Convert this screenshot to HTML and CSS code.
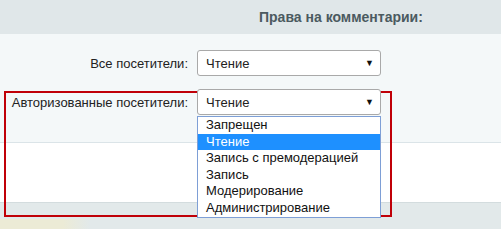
FILE: index.html
```html
<!DOCTYPE html>
<html lang="ru">
<head>
  <meta charset="UTF-8">
  <title>Права на комментарии</title>
  <link rel="stylesheet" href="styles.css">
</head>
<body>
  <div class="heading">
    <span class="heading-title">Права на комментарии:</span>
  </div>

  <div class="form">
    <div class="row">
      <label class="row-label">Все посетители:</label>
      <div class="select">
        <span>Чтение</span>
        <span class="arrow">&#9660;</span>
      </div>
    </div>
    <div class="row">
      <label class="row-label">Авторизованные посетители:</label>
      <div class="select open">
        <span>Чтение</span>
        <span class="arrow">&#9660;</span>
        <ul class="options">
          <li>Запрещен</li>
          <li class="selected">Чтение</li>
          <li>Запись с премодерацией</li>
          <li>Запись</li>
          <li>Модерирование</li>
          <li>Администрирование</li>
        </ul>
      </div>
    </div>
    <div class="mark"></div>
  </div>

  <div class="blank"></div>
  <div class="footer">
    <div class="footer-glow"></div>
  </div>
</body>
</html>
```

FILE: styles.css
```css
body {
  margin: 0;
  font-family: "Liberation Sans", Arial, sans-serif;
  font-size: 13px;
  color: #222;
  background-color: #e2e9ea;
  width: 501px;
  height: 229px;
  overflow: hidden;
}
.heading {
  height: 34px;
  background-color: #e0e7e9;
  display: flex;
  align-items: center;
  padding-left: 259px;
}
.heading-title {
  font-weight: bold;
  color: #4b5a60;
  font-size: 14px;
}
.form {
  position: relative;
  background-color: #f4f8f9;
  border-bottom: 1px solid #dbe4e8;
  padding-top: 16px;
  box-sizing: border-box;
  height: 109px;
}
.row {
  display: grid;
  grid-template-columns: 188px 184px;
  column-gap: 9px;
  align-items: center;
  margin-bottom: 13px;
}
.row-label {
  text-align: right;
}
.select {
  position: relative;
  z-index: 2;
  height: 26px;
  box-sizing: border-box;
  border: 1px solid #a9a9a9;
  border-radius: 3px;
  background-color: #fff;
  display: flex;
  align-items: center;
  justify-content: space-between;
  padding: 0 6px 0 8px;
}
.arrow {
  font-size: 9px;
  color: #111;
}
.options {
  position: absolute;
  left: -1px;
  top: 26px;
  width: 184px;
  margin: 0;
  padding: 0;
  list-style: none;
  background-color: #fff;
  border: 1px solid #7e9fd6;
  box-sizing: border-box;
  z-index: 3;
}
.options li {
  height: 16.6px;
  line-height: 16.6px;
  padding-left: 8px;
  font-size: 13px;
  color: #111;
}
.options li.selected {
  background-color: #1e90ff;
  color: #fff;
}
.mark {
  position: absolute;
  left: 4px;
  top: 57px;
  width: 388px;
  height: 126px;
  box-sizing: border-box;
  border: 2px solid #c00008;
  z-index: 1;
}
.blank {
  height: 59px;
  background-color: #fff;
  border-bottom: 1px solid #d3dcde;
}
.footer {
  height: 26px;
  position: relative;
}
.footer-glow {
  position: absolute;
  left: 0;
  bottom: 0;
  width: 90px;
  height: 10px;
  background: linear-gradient(to right, #ecebd6 70%, rgba(236, 235, 214, 0));
}
```
